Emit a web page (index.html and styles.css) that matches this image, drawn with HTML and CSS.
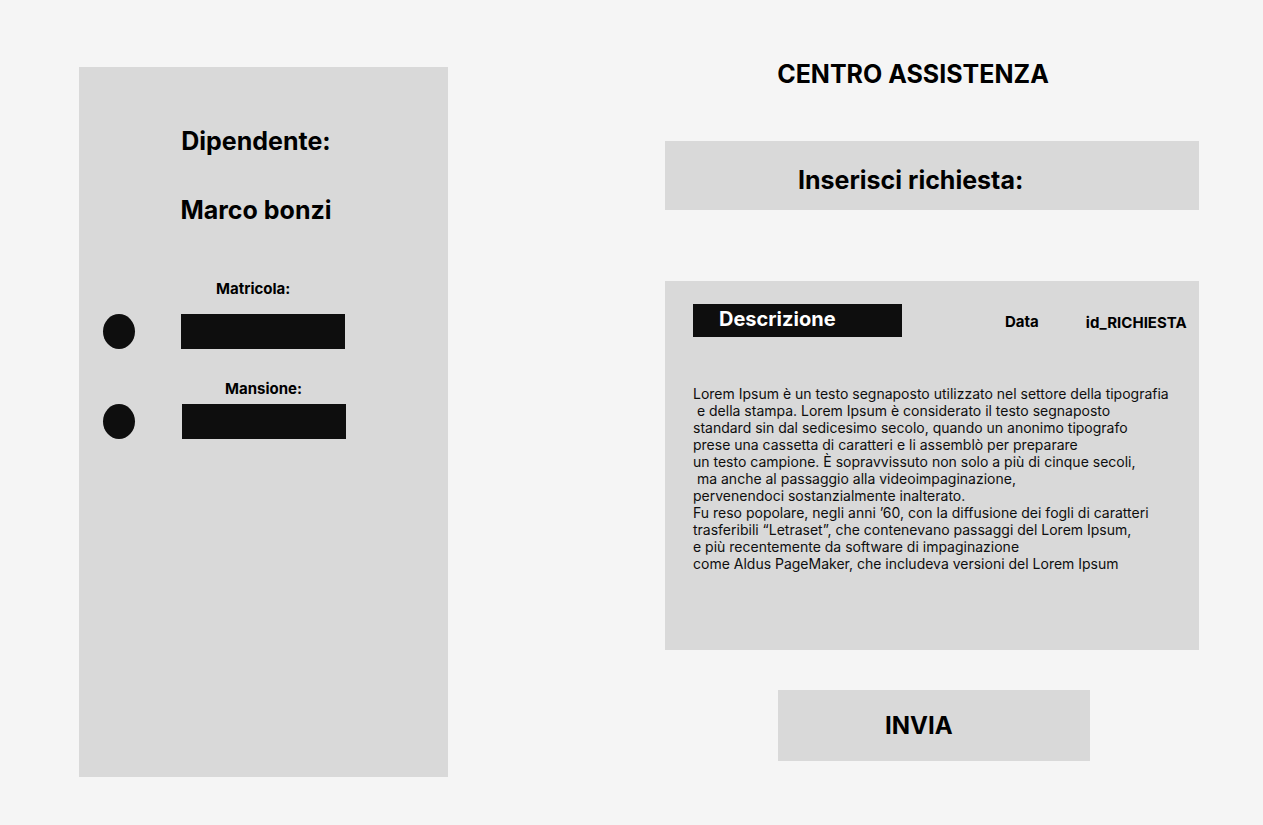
FILE: index.html
```html
<!DOCTYPE html>
<html lang="it">
<head>
<meta charset="utf-8">
<title>Centro Assistenza</title>
<link rel="stylesheet" href="styles.css">
</head>
<body>
<div class="page">
  <section class="employee">
    <h2 class="employee-title">Dipendente:</h2>
    <h2 class="employee-name">Marco bonzi</h2>
    <div class="field-label field-label--matricola">Matricola:</div>
    <div class="field-row field-row--first">
      <span class="dot"></span>
      <span class="field-box"></span>
    </div>
    <div class="field-label field-label--mansione">Mansione:</div>
    <div class="field-row field-row--second">
      <span class="dot"></span>
      <span class="field-box"></span>
    </div>
  </section>

  <section class="support">
    <h1 class="support-title">CENTRO ASSISTENZA</h1>
    <div class="request-bar">Inserisci richiesta:</div>
    <div class="request-card">
      <div class="request-head">
        <div class="desc-tag">Descrizione</div>
        <div class="head-data">Data</div>
        <div class="head-id">id_RICHIESTA</div>
      </div>
      <div class="request-text">Lorem Ipsum è un testo segnaposto utilizzato nel settore della tipografia
 e della stampa. Lorem Ipsum è considerato il testo segnaposto
standard sin dal sedicesimo secolo, quando un anonimo tipografo
prese una cassetta di caratteri e li assemblò per preparare
un testo campione. È sopravvissuto non solo a più di cinque secoli,
 ma anche al passaggio alla videoimpaginazione,
pervenendoci sostanzialmente inalterato.
Fu reso popolare, negli anni ’60, con la diffusione dei fogli di caratteri
trasferibili “Letraset”, che contenevano passaggi del Lorem Ipsum,
e più recentemente da software di impaginazione
come Aldus PageMaker, che includeva versioni del Lorem Ipsum</div>
    </div>
    <button class="send-btn" type="button">INVIA</button>
  </section>
</div>
</body>
</html>
```

FILE: styles.css
```css
* { box-sizing: border-box; }

html, body {
  margin: 0;
  padding: 0;
}

body {
  background: #f5f5f5;
  font-family: Inter, "Noto Sans", "Liberation Sans", sans-serif;
  color: #000;
  width: 1263px;
  height: 825px;
  overflow: hidden;
}

.page {
  display: flex;
  align-items: flex-start;
}

/* ---------- left card ---------- */
.employee {
  margin: 67px 0 0 79px;
  width: 369px;
  height: 710px;
  background: #d9d9d9;
  padding-top: 59px;
  display: flex;
  flex-direction: column;
}

.employee-title,
.employee-name {
  margin: 0;
  font-size: 25px;
  font-weight: 700;
  line-height: 30px;
  text-align: center;
  padding-right: 15px;
}

.employee-name {
  margin-top: 39px;
}

.field-label {
  font-size: 15px;
  font-weight: 700;
  line-height: 18px;
}

.field-label--matricola {
  margin-top: 55px;
  padding-left: 137px;
}

.field-label--mansione {
  margin-top: 31px;
  padding-left: 146px;
}

.field-row {
  display: flex;
  align-items: center;
  padding-left: 24px;
}

.field-row--first {
  margin-top: 16px;
  gap: 46px;
}

.field-row--second {
  margin-top: 6px;
  gap: 47px;
}

.dot {
  width: 32px;
  height: 35px;
  border-radius: 50%;
  background: #0e0e0e;
}

.field-box {
  width: 164px;
  height: 35px;
  background: #0e0e0e;
}

/* ---------- right column ---------- */
.support {
  margin-left: 217px;
  width: 534px;
  padding-top: 59px;
  display: flex;
  flex-direction: column;
  align-items: flex-start;
}

.support-title {
  margin: 0;
  width: 100%;
  font-size: 25px;
  font-weight: 700;
  line-height: 30px;
  text-align: center;
  padding-right: 38px;
}

.request-bar {
  margin-top: 52px;
  width: 100%;
  height: 69px;
  background: #d9d9d9;
  padding: 24px 0 0 133px;
  font-size: 25px;
  font-weight: 700;
  line-height: 30px;
}

.request-card {
  margin-top: 71px;
  width: 100%;
  height: 369px;
  background: #d9d9d9;
  padding: 23px 0 0 28px;
}

.request-head {
  display: flex;
  align-items: center;
}

.desc-tag {
  width: 209px;
  height: 33px;
  background: #0e0e0e;
  color: #fff;
  font-size: 20px;
  font-weight: 700;
  line-height: 31px;
  padding-left: 26px;
}

.head-data,
.head-id {
  font-size: 15px;
  font-weight: 700;
  line-height: 18px;
  padding-top: 3px;
}

.head-data {
  margin-left: 103px;
}

.head-id {
  margin-left: 47px;
  padding-top: 5px;
}

.request-text {
  margin-top: 48px;
  font-size: 14px;
  line-height: 17px;
  white-space: pre;
  color: #0e0e0e;
}

.send-btn {
  margin: 40px 0 0 113px;
  width: 312px;
  height: 71px;
  border: 0;
  background: #d9d9d9;
  font-family: inherit;
  font-size: 24px;
  font-weight: 700;
  line-height: 29px;
  color: #000;
  text-align: left;
  padding: 0 0 0 107px;
  cursor: pointer;
}
```
